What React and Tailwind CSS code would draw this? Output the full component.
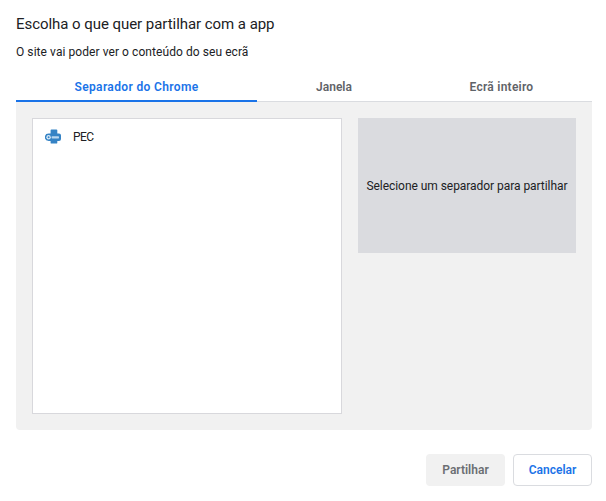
export default function App() {
  return (
    <div className="w-[606px] h-[501px] bg-white pl-4 pr-[14px] flex flex-col font-['Roboto',sans-serif] text-[#202124] overflow-hidden">
      <h1 className="mt-[13px] h-[22px] text-[15px] tracking-[-0.05px] leading-[22px] font-normal">Escolha o que quer partilhar com a app</h1>
      <p className="mt-[9px] h-[16px] text-[12px] tracking-[0.07px] leading-[16px]">O site vai poder ver o conteúdo do seu ecrã</p>

      {/* Tabs */}
      <div className="mt-[12px] flex h-[30px] border-b border-[#dadce0] text-[12px] font-semibold text-[#5f6368]">
        <button className="w-[241px] h-[30px] pt-px border-b-2 border-[#1a73e8] text-[#1a73e8] tracking-[0.35px]">Separador do Chrome</button>
        <button className="w-[154px] h-[29px]">Janela</button>
        <button className="flex-1 h-[29px] tracking-[0.25px]">Ecrã inteiro</button>
      </div>

      <div className="h-[328px] bg-[#f1f1f1] rounded-b-[4px] p-4 flex gap-4">
        <div className="w-[310px] h-[296px] shrink-0 bg-white border border-[#d8d8dc] pl-[12px] pt-[9px]">
          <div className="flex items-center gap-[12px] h-[18px] text-[12px]">
            <svg width="16" height="16" viewBox="0 0 16 16" className="shrink-0">
              <path d="M5.6 1.2Q5.6.4 6.4.4h5q.9 0 .9.9v3.1H14q2 0 2 2v3.7q0 2-2 2h-1.7v1.6q0 .9-.9.9h-5q-.8 0-.8-.9v-1.6H3.7A3.7 3.7 0 0 1 3.7 4.4h1.9z" fill="#3583c5" />
              <circle cx="3.6" cy="8.2" r="2.2" fill="#dcebf7" />
              <circle cx="3.6" cy="8.2" r="1" fill="#3583c5" />
              <rect x="6.6" y="7.2" width="7.4" height="2.2" rx="0.6" fill="#b9d6ee" />
            </svg>
            <span className="tracking-[-0.6px]">PEC</span>
          </div>
        </div>
        <div className="w-[218px] h-[135px] shrink-0 bg-[#dadbdf] flex items-center justify-center text-[12px] tracking-[-0.05px] whitespace-nowrap">
          Selecione um separador para partilhar
        </div>
      </div>

      {/* Footer */}
      <div className="mt-6 flex justify-end gap-2 text-[12px] font-semibold">
        <button className="w-[79px] h-8 rounded-[4px] bg-[#f1f1f1] text-[#6b6e73]">Partilhar</button>
        <button className="w-[79px] h-8 rounded-[4px] bg-white border border-[#dadce0] text-[#1a73e8]">Cancelar</button>
      </div>
    </div>
  );
}
